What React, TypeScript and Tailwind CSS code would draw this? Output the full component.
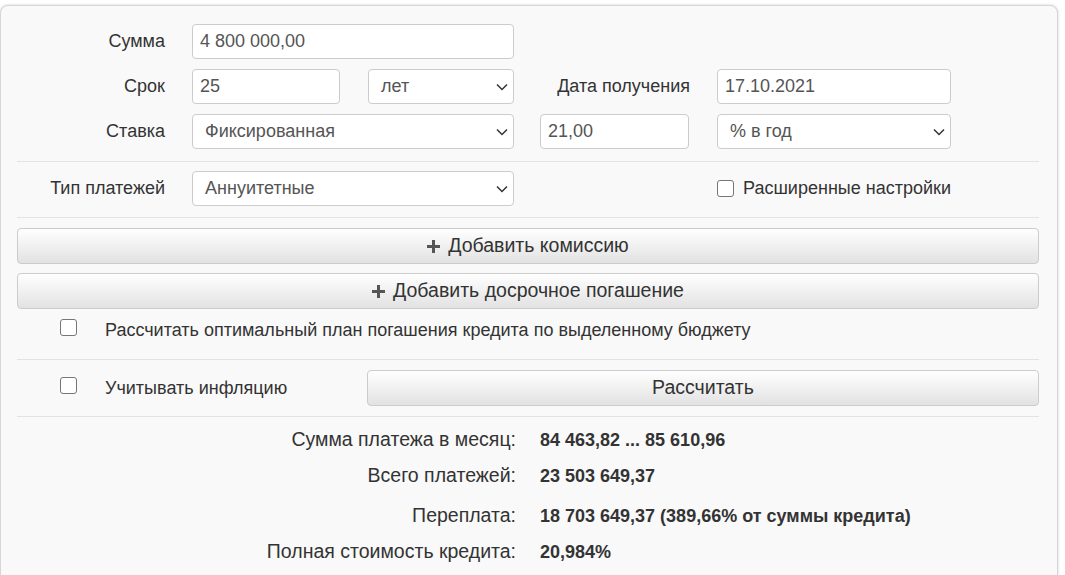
import React from "react";

const Chevron = () => (
  <svg width="12" height="8" viewBox="0 0 12 8" className="shrink-0">
    <polyline points="1,1.5 6,6.5 11,1.5" fill="none" stroke="#333" strokeWidth="1.5" />
  </svg>
);

const Plus = () => (
  <svg width="13" height="13" viewBox="0 0 13 13" className="shrink-0">
    <path d="M5 0h3v5h5v3H8v5H5V8H0V5h5z" fill="#555" />
  </svg>
);

const Box = () => (
  <span className="inline-block w-[17px] h-[17px] rounded-[3px] border border-[#767676] bg-white shrink-0" />
);

const TextInput = ({ value, w }: { value: string; w: string }) => (
  <div className={`${w} h-[35px] rounded-[4px] border border-[#ccc] bg-white px-[7px] flex items-center text-[#555]`}>
    {value}
  </div>
);

const Select = ({ value, w }: { value: string; w: string }) => (
  <div className={`${w} h-[35px] rounded-[4px] border border-[#ccc] bg-white pl-[12px] pr-[5px] flex items-center justify-between text-[#555]`}>
    <span>{value}</span>
    <Chevron />
  </div>
);

const Btn = ({ children, className = "" }: { children: React.ReactNode; className?: string }) => (
  <div
    className={`h-[36px] rounded-[4px] border border-[#ccc] bg-gradient-to-b from-white to-[#e2e2e2] flex items-center justify-center gap-[8px] text-[19.5px] text-[#333] ${className}`}
  >
    {children}
  </div>
);

const Divider = ({ className = "" }: { className?: string }) => <div className={`h-px bg-[#e3e3e3] ${className}`} />;

const results = [
  { label: "Сумма платежа в месяц:", value: "84 463,82 ... 85 610,96", mt: "mt-[12px]" },
  { label: "Всего платежей:", value: "23 503 649,37", mt: "mt-[14px]" },
  { label: "Переплата:", value: "18 703 649,37 (389,66% от суммы кредита)", mt: "mt-[18px]" },
  { label: "Полная стоимость кредита:", value: "20,984%", mt: "mt-[14px]" },
];

export default function App() {
  return (
    <div className="h-screen overflow-hidden bg-white pt-[5px] font-['Liberation_Sans',Arial,sans-serif] text-[18px] text-[#333]">
      <div className="w-[1058px] h-[600px] rounded-t-[8px] border border-[#d6d6d6] bg-[#f9f9f9] shadow-[0_0_3px_rgba(0,0,0,0.18)] pl-[16px] pr-[18px] pt-[18px]">
        {/* Main parameters */}
        <div className="flex items-center">
          <div className="w-[148px] text-right">Сумма</div>
          <div className="ml-[27px]">
            <TextInput value="4 800 000,00" w="w-[322px]" />
          </div>
        </div>
        <div className="flex items-center mt-[10px]">
          <div className="w-[148px] text-right">Срок</div>
          <div className="ml-[27px]">
            <TextInput value="25" w="w-[148px]" />
          </div>
          <div className="ml-[28px]">
            <Select value="лет" w="w-[146px]" />
          </div>
          <div className="w-[176px] text-right">Дата получения</div>
          <div className="ml-[27px]">
            <TextInput value="17.10.2021" w="w-[234px]" />
          </div>
        </div>
        <div className="flex items-center mt-[10px]">
          <div className="w-[148px] text-right">Ставка</div>
          <div className="ml-[27px]">
            <Select value="Фиксированная" w="w-[322px]" />
          </div>
          <div className="ml-[26px]">
            <TextInput value="21,00" w="w-[149px]" />
          </div>
          <div className="ml-[28px]">
            <Select value="% в год" w="w-[234px]" />
          </div>
        </div>

        <Divider className="mt-[12px]" />

        <div className="flex items-center mt-[9px]">
          <div className="w-[148px] text-right">Тип платежей</div>
          <div className="ml-[27px]">
            <Select value="Аннуитетные" w="w-[322px]" />
          </div>
          <div className="ml-[203px] flex items-center gap-[9px]">
            <Box />
            <span>Расширенные настройки</span>
          </div>
        </div>

        <Divider className="mt-[11px]" />

        <Btn className="mt-[10px]">
          <Plus />
          <span>Добавить комиссию</span>
        </Btn>
        <Btn className="mt-[9px]">
          <Plus />
          <span>Добавить досрочное погашение</span>
        </Btn>

        <div className="h-[50px] flex items-center pb-[8px]">
          <div className="ml-[43px]">
            <Box />
          </div>
          <span className="ml-[28px]">Рассчитать оптимальный план погашения кредита по выделенному бюджету</span>
        </div>

        <Divider />

        <div className="flex items-center mt-[10px]">
          <div className="ml-[43px]">
            <Box />
          </div>
          <span className="ml-[28px] w-[262px]">Учитывать инфляцию</span>
          <Btn className="flex-1">Рассчитать</Btn>
        </div>

        <Divider className="mt-[10px]" />

        {/* Results */}
        <div>
          {results.map((r) => (
            <div key={r.label} className={`flex items-center h-[22px] ${r.mt}`}>
              <div className="w-[499px] text-right text-[19.5px]">{r.label}</div>
              <div className="ml-[24px] font-bold">{r.value}</div>
            </div>
          ))}
        </div>
      </div>
    </div>
  );
}
